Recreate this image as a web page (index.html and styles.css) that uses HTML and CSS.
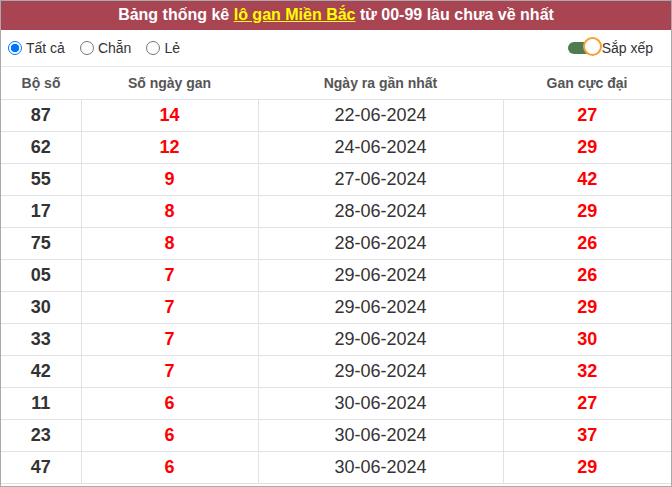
FILE: index.html
```html
<!DOCTYPE html>
<html lang="vi">
<head>
<meta charset="utf-8">
<link rel="stylesheet" href="styles.css">
</head>
<body>
<div class="box">
  <div class="title">Bảng thống kê <a href="#" class="hl">lô gan Miền Bắc</a> từ 00-99 lâu chưa về nhất</div>
  <div class="opts">
    <label class="opt"><span class="radio on"></span>Tất cả</label>
    <label class="opt"><span class="radio"></span>Chẵn</label>
    <label class="opt"><span class="radio"></span>Lẻ</label>
    <div class="spacer"></div>
    <label class="sort"><span class="toggle"><span class="knob"></span></span>Sắp xếp</label>
  </div>
  <table class="tbl">
    <colgroup><col class="c1"><col class="c2"><col class="c3"><col class="c4"></colgroup>
    <thead>
      <tr><th>Bộ số</th><th>Số ngày gan</th><th>Ngày ra gần nhất</th><th>Gan cực đại</th></tr>
    </thead>
    <tbody>
      <tr><td class="n">87</td><td class="r">14</td><td class="d">22-06-2024</td><td class="r">27</td></tr>
      <tr><td class="n">62</td><td class="r">12</td><td class="d">24-06-2024</td><td class="r">29</td></tr>
      <tr><td class="n">55</td><td class="r">9</td><td class="d">27-06-2024</td><td class="r">42</td></tr>
      <tr><td class="n">17</td><td class="r">8</td><td class="d">28-06-2024</td><td class="r">29</td></tr>
      <tr><td class="n">75</td><td class="r">8</td><td class="d">28-06-2024</td><td class="r">26</td></tr>
      <tr><td class="n">05</td><td class="r">7</td><td class="d">29-06-2024</td><td class="r">26</td></tr>
      <tr><td class="n">30</td><td class="r">7</td><td class="d">29-06-2024</td><td class="r">29</td></tr>
      <tr><td class="n">33</td><td class="r">7</td><td class="d">29-06-2024</td><td class="r">30</td></tr>
      <tr><td class="n">42</td><td class="r">7</td><td class="d">29-06-2024</td><td class="r">32</td></tr>
      <tr><td class="n">11</td><td class="r">6</td><td class="d">30-06-2024</td><td class="r">27</td></tr>
      <tr><td class="n">23</td><td class="r">6</td><td class="d">30-06-2024</td><td class="r">37</td></tr>
      <tr><td class="n">47</td><td class="r">6</td><td class="d">30-06-2024</td><td class="r">29</td></tr>
    </tbody>
  </table>
</div>
</body>
</html>
```
FILE: styles.css
```css
html, body {
  margin: 0;
  padding: 0;
  background: #fff;
  font-family: "Liberation Sans", Arial, sans-serif;
}
.box {
  width: 670px;
  height: 485px;
  border: 1px solid #aaa;
  overflow: hidden;
}
.title {
  background: #a94452;
  color: #fff;
  font-weight: bold;
  font-size: 16px;
  height: 29px;
  line-height: 28px;
  text-align: center;
}
.hl {
  color: #ffff00;
  text-decoration: underline;
}
.opts {
  display: flex;
  align-items: center;
  height: 36px;
  padding: 0 6px 0 6px;
  border-bottom: 1px solid #e6e6e6;
  font-size: 14px;
  color: #333;
}
.opt {
  display: flex;
  align-items: center;
  margin-right: 14px;
}
.radio {
  width: 12px;
  height: 12px;
  border: 1px solid #767676;
  border-radius: 50%;
  margin: 0 4px 0 1px;
  box-sizing: content-box;
}
.radio.on {
  border: 1px solid #0075ff;
  background: radial-gradient(circle, #0075ff 0 4px, #fff 4.5px);
}
.spacer { flex: 1; }
.sort {
  display: flex;
  align-items: center;
  margin-right: 12px;
}
.toggle {
  position: relative;
  width: 30px;
  height: 12px;
  border-radius: 6px;
  background: #4e7b52;
  margin-right: 4px;
}
.knob {
  position: absolute;
  right: -4px;
  top: -5px;
  width: 19px;
  height: 19px;
  box-sizing: border-box;
  border: 2.5px solid #f7a134;
  border-radius: 50%;
  background: #fff;
}
.tbl {
  width: 100%;
  border-collapse: collapse;
  table-layout: fixed;
}
.c1 { width: 80px; }
.c2 { width: 177px; }
.c3 { width: 245px; }
.c4 { width: 168px; }
.tbl th {
  height: 32px;
  padding: 0;
  font-size: 14px;
  font-weight: bold;
  color: #555;
  border-bottom: 1px solid #e2e2e2;
  text-align: center;
}
.tbl td {
  height: 31px;
  padding: 0;
  text-align: center;
  border: 1px solid #e2e2e2;
  border-top: none;
  font-size: 18px;
}
.tbl td:first-child { border-left: none; }
.tbl td:last-child { border-right: none; }
.n { font-weight: bold; color: #333; }
.r { font-weight: bold; color: #ff0000; }
.d { color: #333; }
```
